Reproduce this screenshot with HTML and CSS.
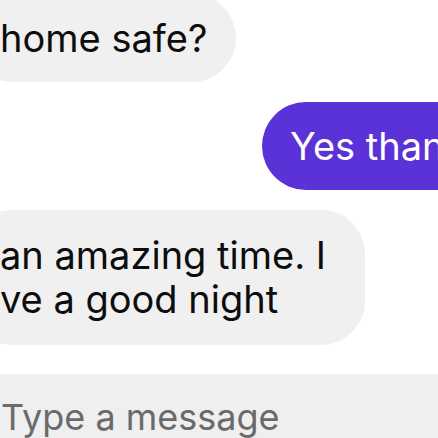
FILE: index.html
```html
<!DOCTYPE html>
<html lang="en">
<head>
<meta charset="utf-8">
<title>Chat</title>
<link rel="stylesheet" href="styles.css">
</head>
<body>
<div class="screen">
  <div class="thread">
    <div class="row">
      <div class="bubble bubble-in bubble-short">home safe?</div>
    </div>
    <div class="row row-out">
      <div class="bubble bubble-out">Yes thanks</div>
    </div>
    <div class="row">
      <div class="bubble bubble-in bubble-tall">an amazing time. I<br>ve a good night</div>
    </div>
  </div>
  <div class="composer">
    <span class="placeholder">Type a message</span>
  </div>
</div>
</body>
</html>
```

FILE: styles.css
```css
html, body {
  margin: 0;
  padding: 0;
  background: #ffffff;
}

.screen {
  width: 438px;
  height: 438px;
  overflow: hidden;
  font-family: "Inter", "Liberation Sans", sans-serif;
  font-size: 38px;
  line-height: 44px;
  color: #0d0d0d;
}

.thread {
  display: flex;
  flex-direction: column;
  gap: 20px;
  margin-top: -6px;
}

.row {
  display: flex;
}

.bubble {
  flex-shrink: 0;
  padding: 22px 34px 22px 32px;
  border-radius: 44px;
  white-space: nowrap;
}

.bubble-in {
  background: #f0f0f0;
  margin-left: -32px;
}

.bubble-short {
  padding-right: 29px;
}

.bubble-tall {
  padding-top: 23px;
  padding-bottom: 24px;
  padding-right: 39px;
}

.bubble-out {
  background: #5b32d8;
  color: #ffffff;
  margin-left: 262px;
  padding-left: 28px;
}

.composer {
  margin-top: 29px;
  background: #efefef;
  height: 80px;
  padding: 20px 0 0 1px;
  box-sizing: border-box;
}

.placeholder {
  font-size: 36px;
  color: #6a6a6a;
}
```
